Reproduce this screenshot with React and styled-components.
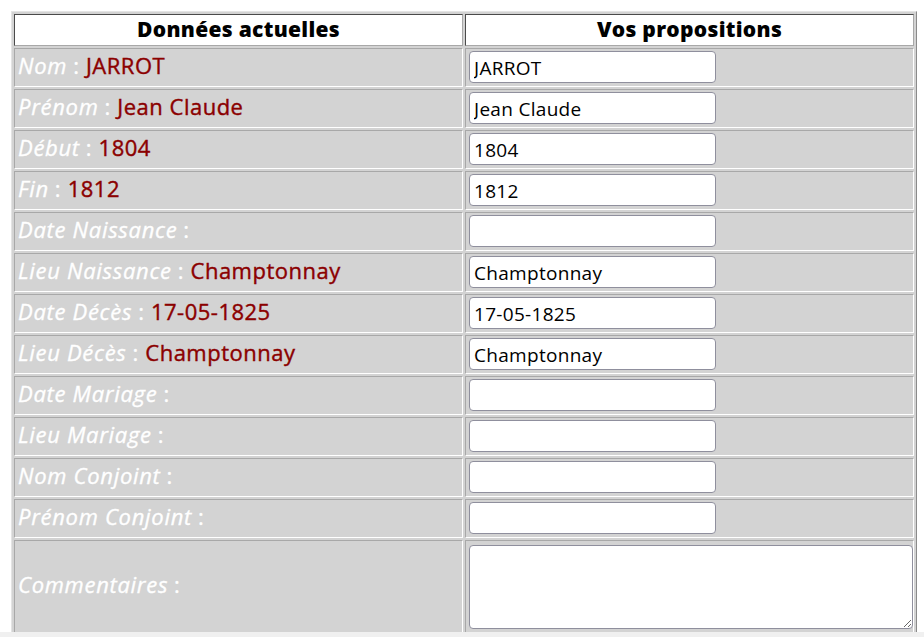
import styled, { createGlobalStyle } from 'styled-components';

const GlobalStyle = createGlobalStyle`
  html, body {
    margin: 0;
    padding: 0;
    background: #ffffff;
  }
  body {
    font-family: "Open Sans", "DejaVu Sans", sans-serif;
  }
`;

const Page = styled.div`
  padding: 11px 0 0 11px;
`;

const Table = styled.table`
  width: 906px;
  border-collapse: separate;
  border-spacing: 2px;
  border: 1px solid;
  border-color: #e4e4e4 #8a8a8a #8a8a8a #e4e4e4;
  background: #d3d3d3;
  table-layout: fixed;
`;

const HeadCell = styled.th`
  background: #ffffff;
  border: 1px solid;
  border-color: #4a4a4a #a8a8a8 #a8a8a8 #4a4a4a;
  padding: 0 1px 2px;
  height: 28px;
  font-size: 21px;
  font-weight: 800;
  letter-spacing: 0.3px;
  color: #000;
  text-align: center;
  vertical-align: middle;
`;

const Cell = styled.td`
  border: 1px solid;
  border-color: #a8a8a8 #ffffff #ffffff #a8a8a8;
  padding: 1px;
  vertical-align: middle;
  font-size: 21px;
  line-height: 28px;
`;

const LabelCell = styled(Cell)`
  padding: 0 2px 5px 3px;
  white-space: nowrap;
`;

const Label = styled.em`
  color: #ffffff;
  font-style: italic;
  font-size: 22px;
  letter-spacing: 0.7px;
  margin-right: 6px;
  -webkit-text-stroke: 0.35px #ffffff;
`;

const Colon = styled.span`
  color: #ffffff;
  font-size: 22px;
  margin-right: 7px;
  -webkit-text-stroke: 0.35px #ffffff;
`;

const Value = styled.span`
  color: #8b0000;
  font-size: 22px;
  font-weight: 500;
  letter-spacing: 0.5px;
  -webkit-text-stroke: 0.4px #8b0000;
`;

const Field = styled.input`
  display: block;
  box-sizing: border-box;
  width: 247px;
  height: 32px;
  margin: 1px 0 2px 2px;
  padding: 1px 4px 0;
  border: 1px solid #8f8f9d;
  border-radius: 4px;
  background: #fff;
  font-family: "Open Sans", "DejaVu Sans", sans-serif;
  font-size: 19px;
  letter-spacing: 0.3px;
  color: #000;
  outline: none;
`;

const Notes = styled.textarea`
  display: block;
  box-sizing: border-box;
  width: 444px;
  height: 84px;
  margin: 3px 0 2px 2px;
  padding: 2px 4px;
  border: 1px solid #8f8f9d;
  border-radius: 4px;
  background: #fff;
  font-family: "Open Sans", "DejaVu Sans", sans-serif;
  font-size: 18px;
  outline: none;
`;

const BottomBar = styled.div`
  position: fixed;
  left: 0;
  right: 0;
  bottom: 0;
  height: 5px;
  background: #f0f0f0;
`;

const rows = [
  ['Nom', 'JARROT'],
  ['Prénom', 'Jean Claude'],
  ['Début', '1804'],
  ['Fin', '1812'],
  ['Date Naissance', ''],
  ['Lieu Naissance', 'Champtonnay'],
  ['Date Décès', '17-05-1825'],
  ['Lieu Décès', 'Champtonnay'],
  ['Date Mariage', ''],
  ['Lieu Mariage', ''],
  ['Nom Conjoint', ''],
  ['Prénom Conjoint', ''],
];

export default function App() {
  return (
    <>
      <GlobalStyle />
      <Page>
        <Table>
          <thead>
            <tr>
              <HeadCell>Données actuelles</HeadCell>
              <HeadCell>Vos propositions</HeadCell>
            </tr>
          </thead>
          <tbody>
            {rows.map(([label, value]) => (
              <tr key={label}>
                <LabelCell>
                  <Label>{label}</Label>
                  <Colon>:</Colon>
                  {value && <Value>{value}</Value>}
                </LabelCell>
                <Cell>
                  <Field type="text" defaultValue={value} />
                </Cell>
              </tr>
            ))}
            <tr>
              <LabelCell>
                <Label>Commentaires</Label>
                <Colon>:</Colon>
              </LabelCell>
              <Cell>
                <Notes />
              </Cell>
            </tr>
          </tbody>
        </Table>
      </Page>
      <BottomBar />
    </>
  );
}
